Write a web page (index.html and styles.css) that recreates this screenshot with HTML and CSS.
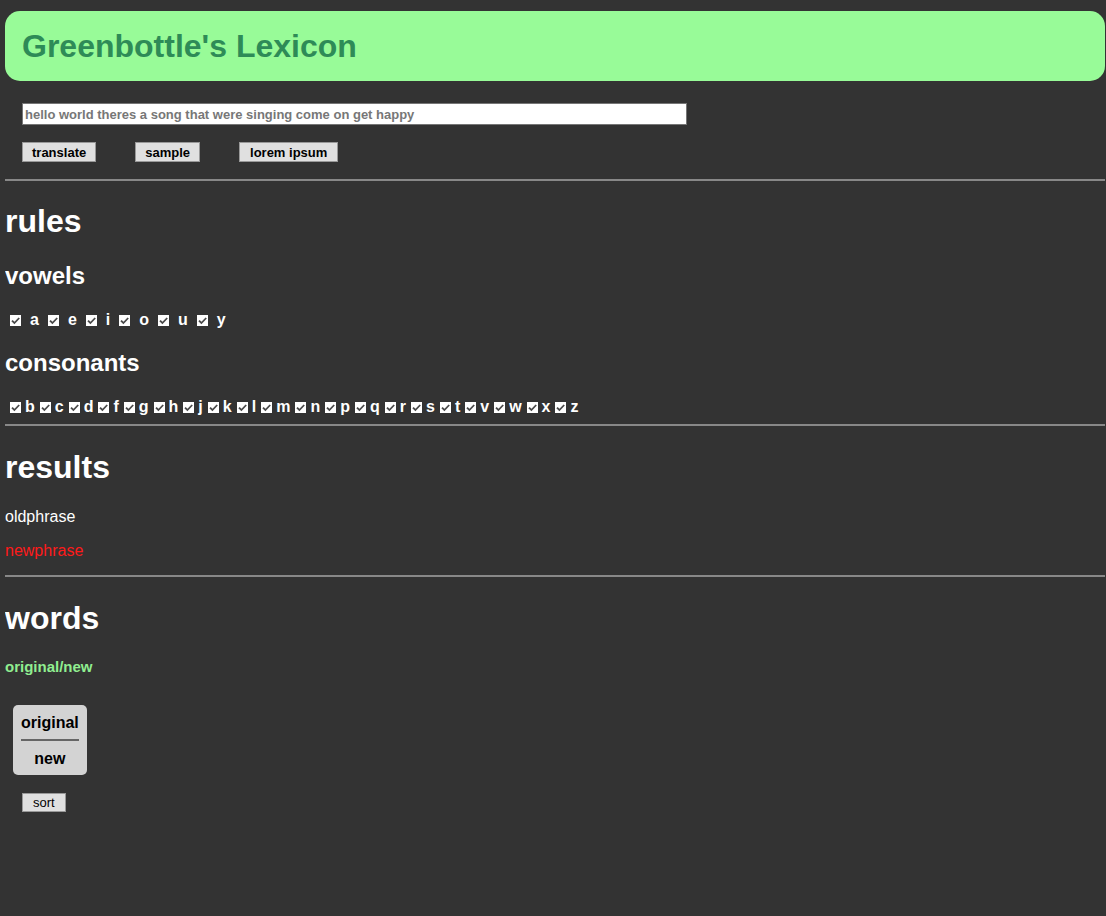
FILE: index.html
```html
<!DOCTYPE html>
<html>
<head>
<meta charset="utf-8">
<title>Greenbottle's Lexicon</title>
<link rel="stylesheet" href="styles.css">
</head>
<body>
<header class="banner"><h1 class="title">Greenbottle's Lexicon</h1></header>
<section class="controls">
  <input class="phrase" type="text" value="hello world theres a song that were singing come on get happy">
  <div class="buttons">
    <button class="btn">translate</button>
    <button class="btn">sample</button>
    <button class="btn btn-wide">lorem ipsum</button>
  </div>
</section>
<hr class="rule">
<h1 class="h-big">rules</h1>
<h2 class="h-mid h-vowels">vowels</h2>
<div class="letters vowels">
  <label class="lt"><span class="cb"><svg viewBox="0 0 11 11" width="11" height="11"><path d="M2 5.6 L4.4 8 L9.2 3" fill="none" stroke="#4a4a4a" stroke-width="1.8"/></svg></span>a</label>
  <label class="lt"><span class="cb"><svg viewBox="0 0 11 11" width="11" height="11"><path d="M2 5.6 L4.4 8 L9.2 3" fill="none" stroke="#4a4a4a" stroke-width="1.8"/></svg></span>e</label>
  <label class="lt"><span class="cb"><svg viewBox="0 0 11 11" width="11" height="11"><path d="M2 5.6 L4.4 8 L9.2 3" fill="none" stroke="#4a4a4a" stroke-width="1.8"/></svg></span>i</label>
  <label class="lt"><span class="cb"><svg viewBox="0 0 11 11" width="11" height="11"><path d="M2 5.6 L4.4 8 L9.2 3" fill="none" stroke="#4a4a4a" stroke-width="1.8"/></svg></span>o</label>
  <label class="lt"><span class="cb"><svg viewBox="0 0 11 11" width="11" height="11"><path d="M2 5.6 L4.4 8 L9.2 3" fill="none" stroke="#4a4a4a" stroke-width="1.8"/></svg></span>u</label>
  <label class="lt"><span class="cb"><svg viewBox="0 0 11 11" width="11" height="11"><path d="M2 5.6 L4.4 8 L9.2 3" fill="none" stroke="#4a4a4a" stroke-width="1.8"/></svg></span>y</label>
</div>
<h2 class="h-mid">consonants</h2>
<div class="letters consonants">
  <label class="lt"><span class="cb"><svg viewBox="0 0 11 11" width="11" height="11"><path d="M2 5.6 L4.4 8 L9.2 3" fill="none" stroke="#4a4a4a" stroke-width="1.8"/></svg></span>b</label>
  <label class="lt"><span class="cb"><svg viewBox="0 0 11 11" width="11" height="11"><path d="M2 5.6 L4.4 8 L9.2 3" fill="none" stroke="#4a4a4a" stroke-width="1.8"/></svg></span>c</label>
  <label class="lt"><span class="cb"><svg viewBox="0 0 11 11" width="11" height="11"><path d="M2 5.6 L4.4 8 L9.2 3" fill="none" stroke="#4a4a4a" stroke-width="1.8"/></svg></span>d</label>
  <label class="lt"><span class="cb"><svg viewBox="0 0 11 11" width="11" height="11"><path d="M2 5.6 L4.4 8 L9.2 3" fill="none" stroke="#4a4a4a" stroke-width="1.8"/></svg></span>f</label>
  <label class="lt"><span class="cb"><svg viewBox="0 0 11 11" width="11" height="11"><path d="M2 5.6 L4.4 8 L9.2 3" fill="none" stroke="#4a4a4a" stroke-width="1.8"/></svg></span>g</label>
  <label class="lt"><span class="cb"><svg viewBox="0 0 11 11" width="11" height="11"><path d="M2 5.6 L4.4 8 L9.2 3" fill="none" stroke="#4a4a4a" stroke-width="1.8"/></svg></span>h</label>
  <label class="lt"><span class="cb"><svg viewBox="0 0 11 11" width="11" height="11"><path d="M2 5.6 L4.4 8 L9.2 3" fill="none" stroke="#4a4a4a" stroke-width="1.8"/></svg></span>j</label>
  <label class="lt"><span class="cb"><svg viewBox="0 0 11 11" width="11" height="11"><path d="M2 5.6 L4.4 8 L9.2 3" fill="none" stroke="#4a4a4a" stroke-width="1.8"/></svg></span>k</label>
  <label class="lt"><span class="cb"><svg viewBox="0 0 11 11" width="11" height="11"><path d="M2 5.6 L4.4 8 L9.2 3" fill="none" stroke="#4a4a4a" stroke-width="1.8"/></svg></span>l</label>
  <label class="lt"><span class="cb"><svg viewBox="0 0 11 11" width="11" height="11"><path d="M2 5.6 L4.4 8 L9.2 3" fill="none" stroke="#4a4a4a" stroke-width="1.8"/></svg></span>m</label>
  <label class="lt"><span class="cb"><svg viewBox="0 0 11 11" width="11" height="11"><path d="M2 5.6 L4.4 8 L9.2 3" fill="none" stroke="#4a4a4a" stroke-width="1.8"/></svg></span>n</label>
  <label class="lt"><span class="cb"><svg viewBox="0 0 11 11" width="11" height="11"><path d="M2 5.6 L4.4 8 L9.2 3" fill="none" stroke="#4a4a4a" stroke-width="1.8"/></svg></span>p</label>
  <label class="lt"><span class="cb"><svg viewBox="0 0 11 11" width="11" height="11"><path d="M2 5.6 L4.4 8 L9.2 3" fill="none" stroke="#4a4a4a" stroke-width="1.8"/></svg></span>q</label>
  <label class="lt"><span class="cb"><svg viewBox="0 0 11 11" width="11" height="11"><path d="M2 5.6 L4.4 8 L9.2 3" fill="none" stroke="#4a4a4a" stroke-width="1.8"/></svg></span>r</label>
  <label class="lt"><span class="cb"><svg viewBox="0 0 11 11" width="11" height="11"><path d="M2 5.6 L4.4 8 L9.2 3" fill="none" stroke="#4a4a4a" stroke-width="1.8"/></svg></span>s</label>
  <label class="lt"><span class="cb"><svg viewBox="0 0 11 11" width="11" height="11"><path d="M2 5.6 L4.4 8 L9.2 3" fill="none" stroke="#4a4a4a" stroke-width="1.8"/></svg></span>t</label>
  <label class="lt"><span class="cb"><svg viewBox="0 0 11 11" width="11" height="11"><path d="M2 5.6 L4.4 8 L9.2 3" fill="none" stroke="#4a4a4a" stroke-width="1.8"/></svg></span>v</label>
  <label class="lt"><span class="cb"><svg viewBox="0 0 11 11" width="11" height="11"><path d="M2 5.6 L4.4 8 L9.2 3" fill="none" stroke="#4a4a4a" stroke-width="1.8"/></svg></span>w</label>
  <label class="lt"><span class="cb"><svg viewBox="0 0 11 11" width="11" height="11"><path d="M2 5.6 L4.4 8 L9.2 3" fill="none" stroke="#4a4a4a" stroke-width="1.8"/></svg></span>x</label>
  <label class="lt"><span class="cb"><svg viewBox="0 0 11 11" width="11" height="11"><path d="M2 5.6 L4.4 8 L9.2 3" fill="none" stroke="#4a4a4a" stroke-width="1.8"/></svg></span>z</label>
</div>
<hr class="rule rule-tight">
<h1 class="h-big h-results">results</h1>
<p class="old">oldphrase</p>
<p class="new">newphrase</p>
<hr class="rule rule-short">
<h1 class="h-big h-words">words</h1>
<p class="legend">original/new</p>
<div class="cards">
  <div class="card">
    <div class="card-orig">original</div>
    <div class="card-line"></div>
    <div class="card-new">new</div>
  </div>
</div>
<div class="sortrow"><button class="btn btn-sort">sort</button></div>
</body>
</html>
```
FILE: styles.css
```css
html { background: #333; }
body {
  margin: 0 1px 0 5px;
  background: #333;
  color: #fff;
  font-family: "Liberation Sans", Arial, sans-serif;
}
.banner {
  margin-top: 11px;
  height: 70px;
  background: #98fb98;
  border-radius: 15px;
  display: flex;
  align-items: center;
  padding: 0 17px;
}
.title {
  margin: 0;
  font-size: 32px;
  font-weight: bold;
  color: #2e8b57;
}
.controls {
  padding-left: 17px;
  padding-top: 22px;
}
.phrase {
  display: block;
  box-sizing: border-box;
  width: 665px;
  height: 22px;
  margin: 0;
  padding: 0 2px;
  border: 1px solid #767676;
  background: #fff;
  color: #777;
  font-family: "Liberation Sans", Arial, sans-serif;
  font-size: 13px;
  font-weight: bold;
}
.buttons {
  display: flex;
  gap: 39px;
  margin-top: 17px;
}
.btn {
  height: 20px;
  padding: 0 9px;
  border: 1px solid #999;
  background: #e0e0e0;
  color: #000;
  font-family: "Liberation Sans", Arial, sans-serif;
  font-size: 13px;
  font-weight: bold;
}
.btn-wide { padding: 0 10px; }
.rule {
  margin: 17px 0 0;
  border: 0;
  border-top: 2px solid #888;
  height: 0;
}
.rule-tight { margin-top: 8px; }
.rule-short { margin-top: 15px; }
.h-big {
  margin: 22px 0 0;
  font-size: 32px;
  line-height: 37px;
  font-weight: bold;
}
.h-results { margin-top: 23px; }
.h-words { margin-top: 23px; }
.h-mid {
  margin: 20px 0 0;
  font-size: 24px;
  line-height: 28px;
  font-weight: bold;
}
.h-vowels { margin-top: 22px; }
.letters {
  display: flex;
  margin-top: 21px;
  font-size: 16px;
  font-weight: bold;
  line-height: 18px;
}
.lt {
  display: flex;
  align-items: center;
}
.cb {
  display: block;
  width: 11px;
  height: 11px;
  background: #fff;
  margin: 0 4px 0 5px;
}
.cb svg { display: block; }
.vowels .cb { margin: 0 9px 0 5px; }
.vowels .lt { margin-right: 4px; }
.old, .new {
  margin: 0;
  font-size: 16px;
}
.old { margin-top: 22px; }
.new { margin-top: 16px; color: #ff1a1a; }
.legend {
  margin: 21px 0 0;
  font-size: 15px;
  font-weight: bold;
  color: #90ee90;
}
.cards {
  display: flex;
  padding-left: 8px;
  margin-top: 30px;
}
.card {
  background: #d3d3d3;
  color: #000;
  border-radius: 5px;
  padding: 9px 8px 7px;
  font-size: 16px;
  font-weight: bold;
  text-align: center;
}
.card-line {
  height: 2px;
  background: #666;
  margin: 7px 0 9px;
}
.sortrow {
  padding-left: 17px;
  margin-top: 18px;
}
.btn-sort {
  height: 19px;
  font-weight: normal;
  padding: 0 10px;
}
```
